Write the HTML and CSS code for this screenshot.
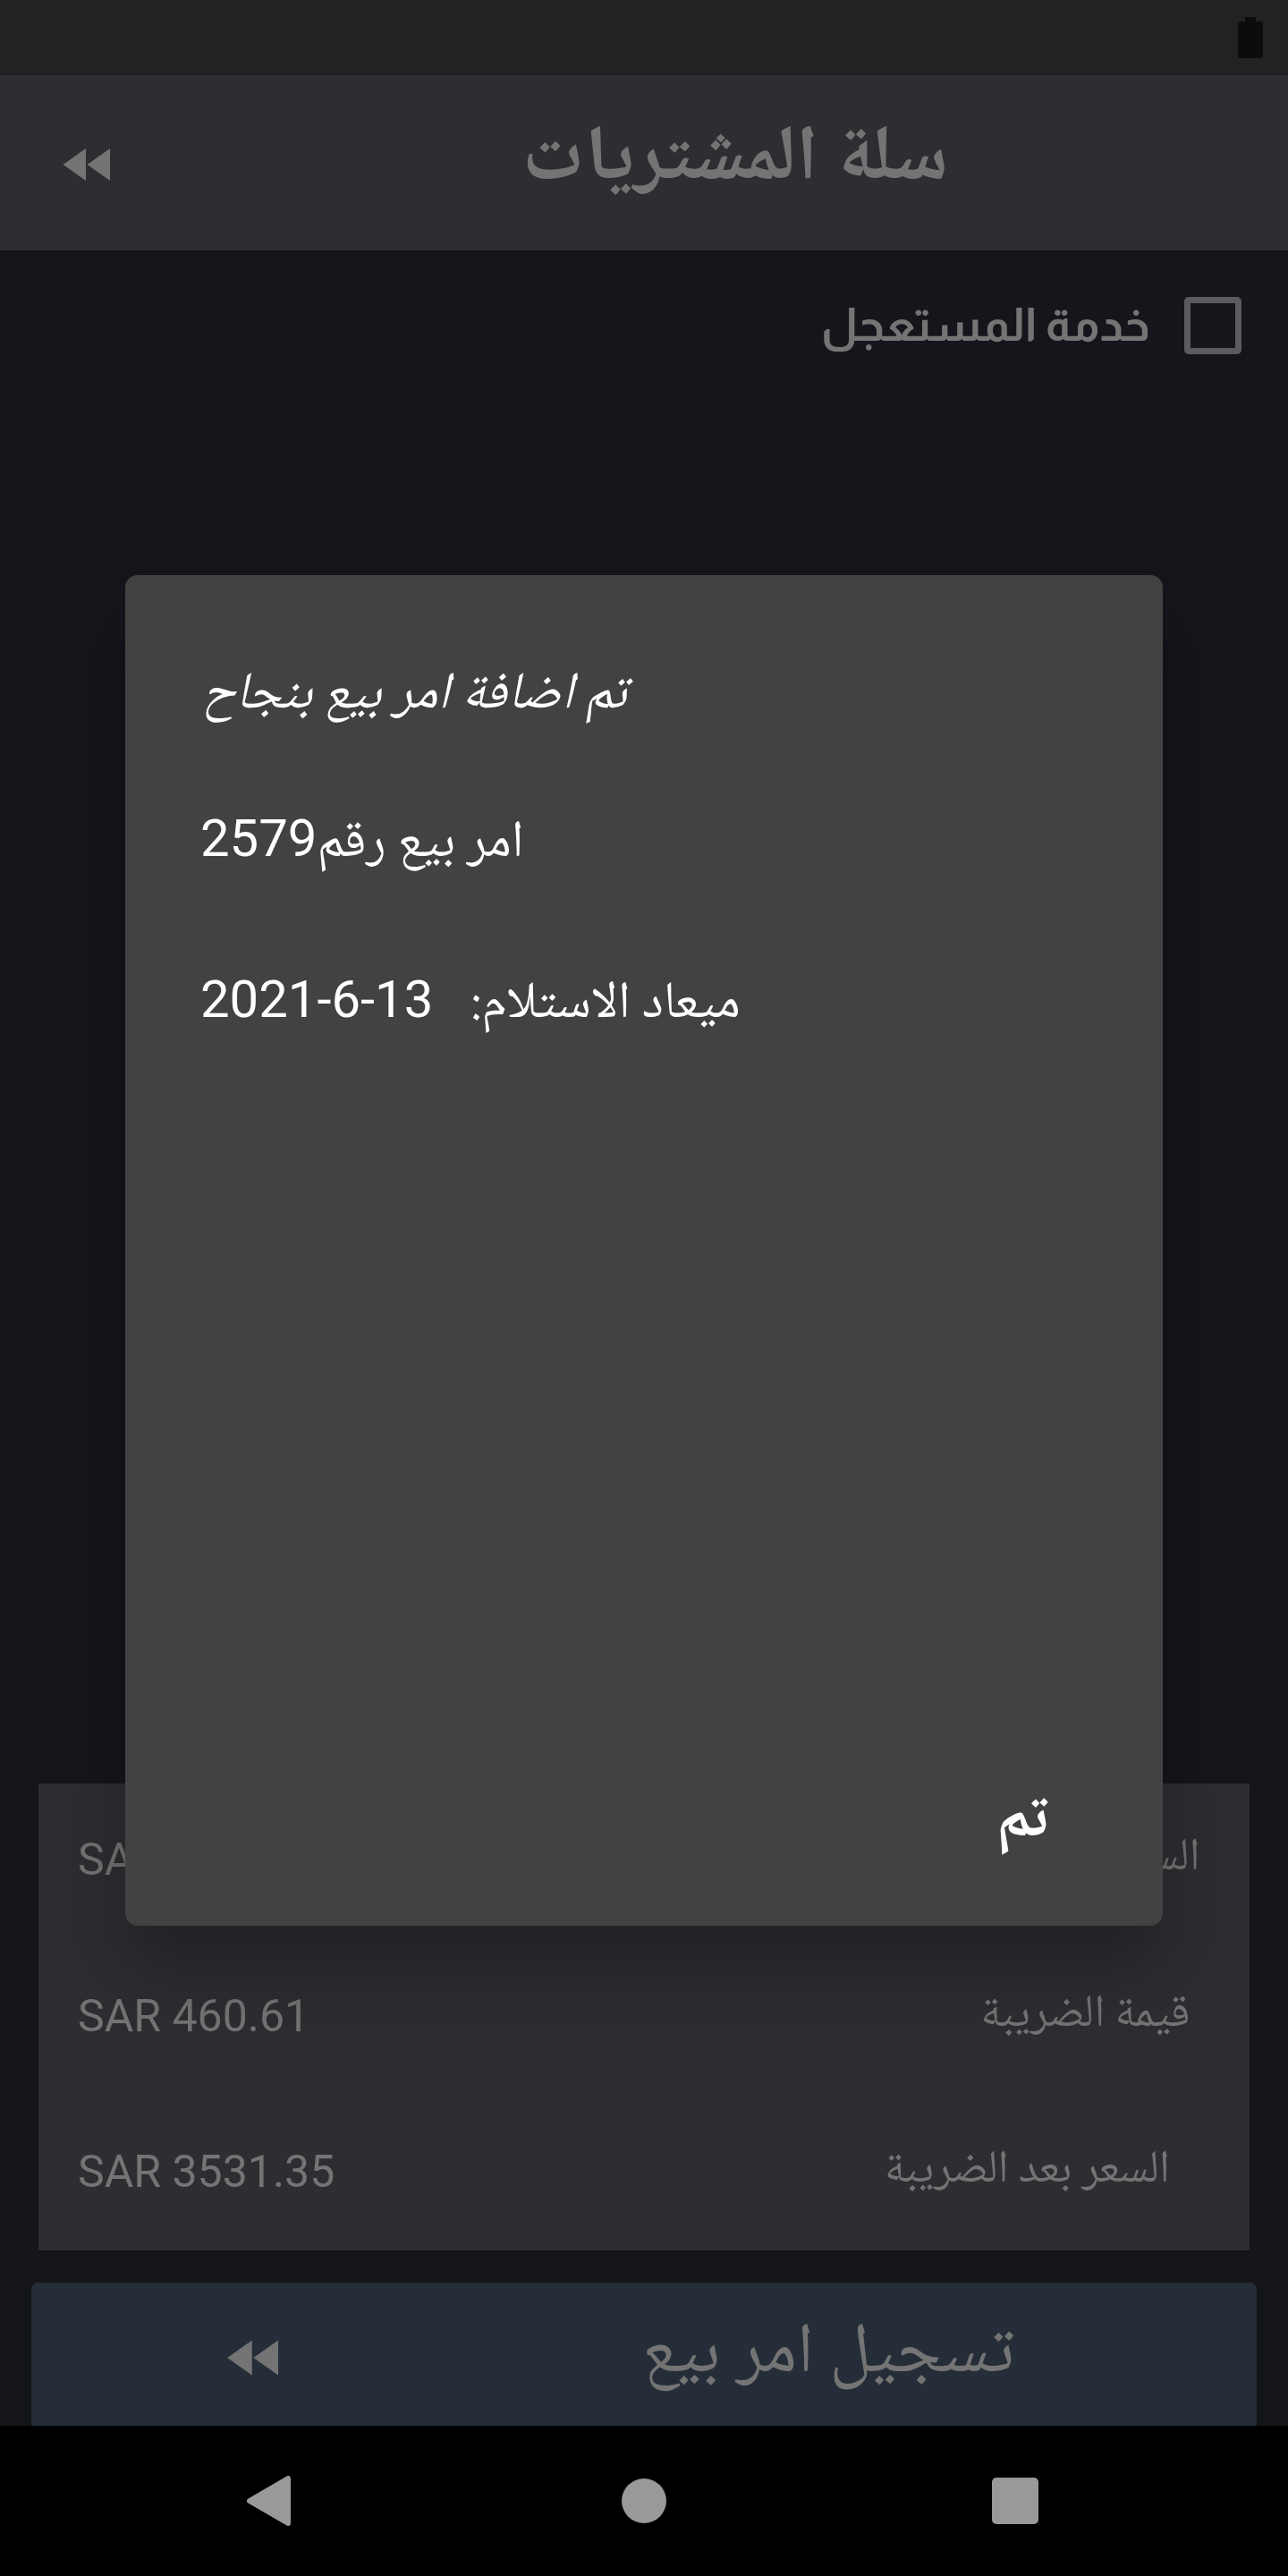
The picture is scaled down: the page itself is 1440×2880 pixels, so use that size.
FILE: index.html
```html
<!DOCTYPE html>
<html lang="ar" dir="rtl">
<head>
<meta charset="utf-8">
<meta name="viewport" content="width=device-width, initial-scale=1">
<title>سلة المشتريات</title>
<link rel="stylesheet" href="styles.css">
</head>
<body>
<div class="app">
  <div class="status-bar">
    <svg class="battery" viewBox="0 0 28 46" aria-hidden="true"><path d="M8 0h12v5h5a3 3 0 0 1 3 3v35a3 3 0 0 1-3 3H3a3 3 0 0 1-3-3V8a3 3 0 0 1 3-3h5z"/></svg>
  </div>
  <header class="header">
    <h1 class="title">سلة المشتريات</h1>
    <button class="header-back" type="button" aria-label="رجوع">
      <svg class="rewind" viewBox="0 0 24 24" aria-hidden="true"><path d="M11 18V6l-8.500 6zM11.500 12l8.500 6V6z"/></svg>
    </button>
  </header>
  <main class="cart">
    <label class="urgent"><input class="urgent-box" type="checkbox"><span>خدمة المستعجل</span></label>
    <dl class="totals">
      <div class="total"><dt>&nbsp;السعر قبل الضريبة</dt><dd>SAR 3070.74</dd></div>
      <div class="total"><dt>&nbsp;&nbsp;قيمة الضريبة</dt><dd>SAR 460.61</dd></div>
      <div class="total"><dt>&nbsp;&nbsp;&nbsp;&nbsp;السعر بعد الضريبة</dt><dd>SAR 3531.35</dd></div>
    </dl>
    <button class="submit" type="button">
      <span class="submit-text">تسجيل امر بيع</span>
      <span class="submit-icon"><svg class="rewind rewind-large" viewBox="0 0 24 24" aria-hidden="true"><path d="M11 18V6l-8.500 6zM11.500 12l8.500 6V6z"/></svg></span>
    </button>
  </main>
  <div class="overlay">
    <section class="dialog" role="dialog" aria-modal="true" aria-labelledby="dialog-title">
      <div class="dialog-body">
        <p class="line line-title" id="dialog-title">تم اضافة امر بيع بنجاح</p>
        <p class="line">امر بيع رقم<bdi class="latin" dir="ltr">2579</bdi></p>
        <p class="line line-date"><span>ميعاد الاستلام:</span><bdi class="latin" dir="ltr">2021-6-13</bdi></p>
      </div>
      <button class="dialog-ok" type="button">تم</button>
    </section>
  </div>
</div>
<nav class="nav" dir="ltr" aria-label="النظام">
  <button type="button" aria-label="رجوع"><svg viewBox="0 0 60 60" aria-hidden="true"><path d="M48 5v50L5 30z" stroke="#999" stroke-width="6" stroke-linejoin="round"/></svg></button>
  <button type="button" aria-label="الرئيسية"><svg viewBox="0 0 60 60" aria-hidden="true"><circle cx="30" cy="30" r="25"/></svg></button>
  <button type="button" aria-label="التطبيقات"><svg viewBox="0 0 60 60" aria-hidden="true"><rect x="3" y="4" width="52" height="52" rx="5"/></svg></button>
</nav>
</body>
</html>
```
FILE: styles.css
```css
* { box-sizing: border-box; }

body {
  margin: 0;
  min-height: 100vh;
  display: flex;
  flex-direction: column;
  background: #15161b;
  color: #747474;
  font-family: "Noto Naskh Arabic", Roboto, sans-serif;
}

h1, p, dl, dd { margin: 0; }

button {
  border: 0;
  padding: 0;
  background: none;
  color: inherit;
  font: inherit;
}

svg { display: block; }

.title, .line-title, .dialog-ok {
  font-family: "Noto Naskh Arabic UI", "Noto Naskh Arabic", sans-serif;
}

.app {
  position: relative;
  flex: 1;
  display: flex;
  flex-direction: column;
}

.status-bar {
  height: 84px;
  display: flex;
  align-items: center;
  padding: 0 28px;
  background: #222224;
}

.battery { width: 28px; height: 46px; fill: #0c0c0c; }

.header {
  height: 196px;
  display: flex;
  align-items: center;
  background: #2d2e32;
  box-shadow: 0 2px 10px rgba(0, 0, 0, 0.2);
}

.title {
  flex: 1;
  padding-bottom: 8px;
  text-align: center;
  font-size: 87px;
  font-weight: 700;
  line-height: 160px;
}

.header-back {
  width: 204px;
  height: 100%;
  display: flex;
  justify-content: flex-end;
  align-items: center;
  padding: 4px 0 0 63px;
}

.rewind { width: 72px; height: 72px; fill: #747474; }
.rewind-large { width: 78px; height: 78px; }

.cart {
  flex: 1;
  display: flex;
  flex-direction: column;
}

.urgent {
  display: flex;
  align-items: center;
  align-self: flex-start;
  gap: 38px;
  margin: 28px 52px auto;
  font: 700 51px/112px Almarai, Cairo, "Noto Kufi Arabic", sans-serif;
}

.urgent-box {
  appearance: none;
  width: 64px;
  height: 64px;
  margin: 0;
  border: 7px solid #5b5b5d;
  border-radius: 5px;
}

.totals {
  margin: 0 43px 36px;
  background: #2d2e32;
}

.total {
  height: 174px;
  display: flex;
  justify-content: space-between;
  align-items: center;
  padding: 0 44px 4px;
  font-size: 51px;
  line-height: 80px;
}

.total + .total { border-top: 1px solid #2a2b2f; }

.total dd { font-family: Roboto, sans-serif; font-size: 50px; direction: ltr; }

.submit {
  height: 160px;
  margin: 0 35px;
  padding-top: 8px;
  display: flex;
  align-items: center;
  border-radius: 8px 8px 0 0;
  background: #252e38;
  box-shadow: 0 6px 12px rgba(0, 0, 0, 0.3);
}

.submit-text {
  flex: 1;
  padding: 0 88px 4px 0;
  font-size: 79px;
  line-height: 120px;
}

.submit-icon {
  width: 36.5%;
  display: flex;
  justify-content: center;
}

.overlay {
  position: absolute;
  inset: 84px 0 0;
  display: flex;
  align-items: center;
  justify-content: center;
  padding: 0 140px;
}

.dialog {
  flex: 1;
  min-height: 1510px;
  display: flex;
  flex-direction: column;
  justify-content: space-between;
  padding: 98px 84px 70px;
  border-radius: 14px;
  background: #424242;
  color: #fff;
  box-shadow: 0 48px 90px rgba(0, 0, 0, 0.3);
}

.dialog-body { display: flex; flex-direction: column; gap: 84px; }

.line { font-size: 58px; line-height: 96px; text-align: left; }

.line-title { font-style: italic; line-height: 72px; }

.line-date {
  display: flex;
  justify-content: flex-end;
  align-items: baseline;
  gap: 42px;
}

.latin { font-family: Roboto, sans-serif; line-height: 58px; }

.dialog-ok {
  align-self: flex-start;
  margin-right: 44px;
  font-size: 70px;
  font-weight: 700;
  line-height: 96px;
}

.nav {
  height: 168px;
  display: grid;
  grid-template-columns: repeat(3, 1fr);
  padding: 0 96px;
  background: #000;
}

.nav button { display: grid; place-items: center; }

.nav svg { width: 60px; height: 60px; fill: #999; }
```
